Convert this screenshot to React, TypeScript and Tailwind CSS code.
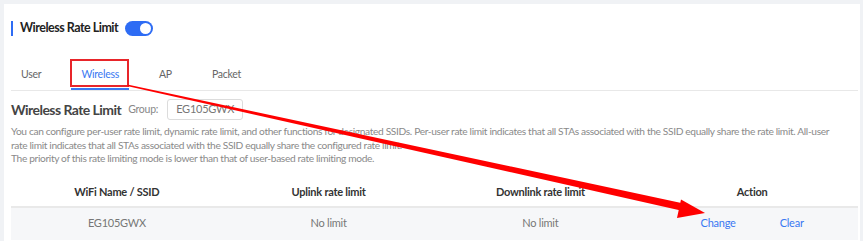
import React from 'react';

const font = { fontFamily: 'Lato, "Noto Sans", Arial, sans-serif' };

const tabs = ['User', 'Wireless', 'AP', 'Packet'];

function Toggle() {
  return (
    <div className="relative h-[15px] w-[28px] rounded-full bg-[#2e6cf4]">
      <div className="absolute right-[2px] top-[2px] h-[11px] w-[11px] rounded-full bg-white" />
    </div>
  );
}

// annotation arrow drawn over the page
function Arrow() {
  return (
    <svg className="pointer-events-none absolute left-0 top-0" width="863" height="241">
      <polygon points="127,86 128.5,84.8 686,204 683,211" fill="#f00" />
      <polygon points="705,213 681,199.5 677,218" fill="#f00" />
    </svg>
  );
}

export default function App() {
  return (
    <div
      className="relative h-[241px] w-[863px] overflow-hidden bg-[#f0f2f5] pl-[4px] pr-[3px] pt-[4px] tracking-[-0.25px]"
      style={font}
    >
      <div className="h-full bg-white pl-[7px] pr-[2px]">
        {/* title */}
        <div className="flex h-[48px] items-center">
          <div className="h-[15px] w-[2px] bg-[#2e6cf4]" />
          <span className="ml-[7px] text-[12.5px] font-bold tracking-[-0.5px] text-[#222]">Wireless Rate Limit</span>
          <div className="ml-[7px]">
            <Toggle />
          </div>
        </div>

        {/* tabs */}
        <div className="mt-[9px] flex gap-[20px] border-b border-[#e8e8e8]">
          {tabs.map((t) => (
            <div
              key={t}
              className={`px-[10px] pb-[7px] pt-[7px] text-[10.5px] leading-[13px] ${
                t === 'Wireless' ? 'border-b-2 border-[#3a78f2] text-[#3a78f2]' : 'border-b-2 border-transparent text-[#666]'
              }`}
            >
              {t}
            </div>
          ))}
        </div>

        {/* section */}
        <div className="mt-[8px] flex items-center">
          <span className="text-[14px] font-bold tracking-[-0.55px] text-[#444]">Wireless Rate Limit</span>
          <span className="ml-[7px] text-[10.5px] text-[#888]">Group:</span>
          <div className="ml-[9px] flex h-[21px] w-[76px] items-center rounded-[3px] border border-[#dcdcdc] px-[8px] text-[11px] text-[#777]">
            EG105GWX
          </div>
        </div>
        <div className="mt-[5px] whitespace-nowrap text-[10.2px] leading-[13.5px] tracking-[-0.35px] text-[#8a8a8a]">
          <p>
            You can configure per-user rate limit, dynamic rate limit, and other functions for designated SSIDs. Per-user rate limit indicates that all STAs associated with the SSID equally share the rate limit. All-user
          </p>
          <p>rate limit indicates that all STAs associated with the SSID equally share the configured rate limit.</p>
          <p>The priority of this rate limiting mode is lower than that of user-based rate limiting mode.</p>
        </div>

        {/* table */}
        <div className="mt-[14px]">
          <div className="grid h-[28px] grid-cols-4 items-center border-b-2 border-[#e9e9e9] text-[11px] font-bold text-[#333]">
            <div className="text-center">WiFi Name / SSID</div>
            <div className="text-center">Uplink rate limit</div>
            <div className="text-center">Downlink rate limit</div>
            <div className="text-center">Action</div>
          </div>
          <div className="grid h-[32px] grid-cols-4 items-center bg-[#f6f7f9] text-[11px] text-[#777]">
            <div className="text-center">EG105GWX</div>
            <div className="text-center">No limit</div>
            <div className="text-center">No limit</div>
            <div className="flex justify-center gap-[44px] text-[#3a78f2]">
              <span>Change</span>
              <span>Clear</span>
            </div>
          </div>
        </div>
      </div>

      {/* red highlight box */}
      <div className="pointer-events-none absolute left-[70px] top-[59px] h-[28px] w-[59px] border-2 border-[#e8252a]" />
      <Arrow />
    </div>
  );
}
